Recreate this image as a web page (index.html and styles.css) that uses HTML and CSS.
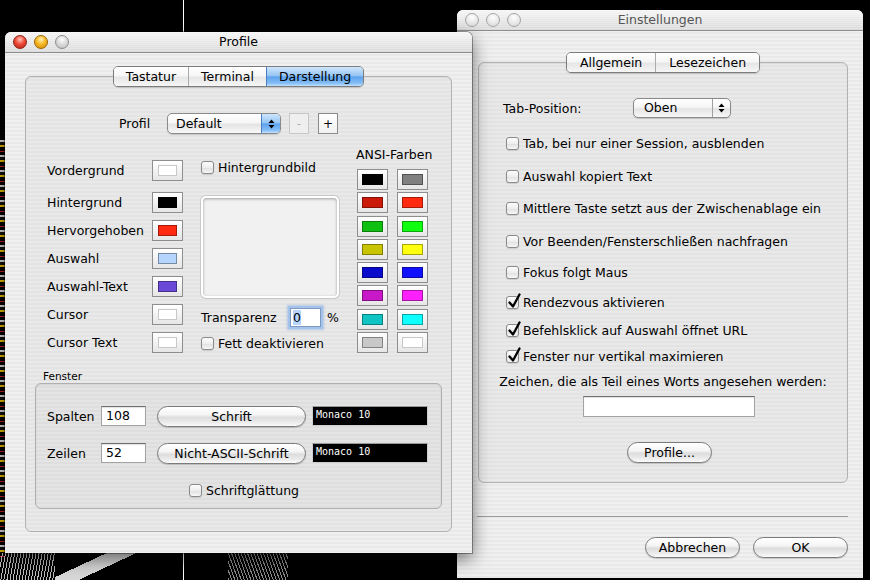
FILE: index.html
```html
<!DOCTYPE html>
<html lang="de">
<head>
<meta charset="utf-8">
<title>Profile – Einstellungen</title>
<link rel="stylesheet" href="styles.css">
</head>
<body>
<div class="desktop">

  <section class="window prefs inactive">
    <header class="titlebar">
      <div class="lights"><span class="light"></span><span class="light"></span><span class="light"></span></div>
      <h1 class="title">Einstellungen</h1>
      <div></div>
    </header>
    <div class="prefs-body">
      <div class="tabs">
        <span class="tab">Allgemein</span><span class="tab">Lesezeichen</span>
      </div>
      <div class="groupbox prefs-box">
        <div class="tabpos">
          <span class="tabpos-label">Tab-Position:</span>
          <div class="popup popup-oben">
            <span class="popup-text">Oben</span>
            <span class="popup-arrows"><svg width="7" height="12" viewBox="0 0 7 12"><path d="M3.5 1.5 L6.5 5 H0.5Z M3.5 10.5 L6.5 7 H0.5Z" fill="#000"/></svg></span>
          </div>
        </div>
        <ul class="checklist">
          <li class="check"><span class="cb"></span>Tab, bei nur einer Session, ausblenden</li>
          <li class="check"><span class="cb"></span>Auswahl kopiert Text</li>
          <li class="check"><span class="cb"></span>Mittlere Taste setzt aus der Zwischenablage ein</li>
          <li class="check"><span class="cb"></span>Vor Beenden/Fensterschließen nachfragen</li>
          <li class="check"><span class="cb"></span>Fokus folgt Maus</li>
          <li class="check"><span class="cb checked"><svg class="tick" viewBox="0 0 14 16"><path d="M2.5 9.5 L6 13.5 L12.5 1.5"/></svg></span>Rendezvous aktivieren</li>
          <li class="check"><span class="cb checked"><svg class="tick" viewBox="0 0 14 16"><path d="M2.5 9.5 L6 13.5 L12.5 1.5"/></svg></span>Befehlsklick auf Auswahl öffnet URL</li>
          <li class="check"><span class="cb checked"><svg class="tick" viewBox="0 0 14 16"><path d="M2.5 9.5 L6 13.5 L12.5 1.5"/></svg></span>Fenster nur vertikal maximieren</li>
        </ul>
        <p class="zeichen">Zeichen, die als Teil eines Worts angesehen werden:</p>
        <div class="textfield wordchars"></div>
        <button class="btn profile-btn">Profile...</button>
      </div>
      <hr class="sep">
      <div class="dialog-buttons">
        <button class="btn dlg-btn">Abbrechen</button>
        <button class="btn dlg-btn">OK</button>
      </div>
    </div>
  </section>

  <section class="window profile">
    <header class="titlebar">
      <div class="lights"><span class="light red"></span><span class="light yellow"></span><span class="light grey"></span></div>
      <h1 class="title">Profile</h1>
      <div></div>
    </header>
    <div class="profile-body">
      <div class="tabs">
        <span class="tab">Tastatur</span><span class="tab">Terminal</span><span class="tab selected">Darstellung</span>
      </div>
      <div class="groupbox profile-box">
        <div class="profil-row">
          <span class="profil-label">Profil</span>
          <div class="popup popup-default">
            <span class="popup-text">Default</span>
            <span class="popup-arrows blue"><svg width="7" height="12" viewBox="0 0 7 12"><path d="M3.5 1.5 L6.5 5 H0.5Z M3.5 10.5 L6.5 7 H0.5Z" fill="#000"/></svg></span>
          </div>
          <span class="sq-btn disabled">-</span>
          <span class="sq-btn">+</span>
        </div>

        <div class="main">
          <div class="colors">
            <span class="clabel">Vordergrund</span><span class="well"><span class="swatch c-white"></span></span>
            <span class="clabel">Hintergrund</span><span class="well"><span class="swatch c-black"></span></span>
            <span class="clabel">Hervorgehoben</span><span class="well"><span class="swatch c-red"></span></span>
            <span class="clabel">Auswahl</span><span class="well"><span class="swatch c-lightblue"></span></span>
            <span class="clabel">Auswahl-Text</span><span class="well"><span class="swatch c-purple"></span></span>
            <span class="clabel">Cursor</span><span class="well"><span class="swatch c-white"></span></span>
            <span class="clabel">Cursor Text</span><span class="well"><span class="swatch c-white"></span></span>
          </div>

          <div class="bgcol">
            <div class="check bgimg"><span class="cb"></span>Hintergrundbild</div>
            <div class="imagewell"></div>
            <div class="transp">
              <span class="transp-label">Transparenz</span>
              <span class="transp-input"><span class="sel">0</span></span>
              <span class="pct">%</span>
            </div>
            <div class="check fett"><span class="cb"></span>Fett deaktivieren</div>
          </div>

          <div class="ansi">
            <div class="ansi-title">ANSI-Farben</div>
            <div class="ansi-grid">
              <span class="well"><span class="swatch a-black"></span></span><span class="well"><span class="swatch a-grey"></span></span>
              <span class="well"><span class="swatch a-red"></span></span><span class="well"><span class="swatch a-red2"></span></span>
              <span class="well"><span class="swatch a-green"></span></span><span class="well"><span class="swatch a-green2"></span></span>
              <span class="well"><span class="swatch a-yellow"></span></span><span class="well"><span class="swatch a-yellow2"></span></span>
              <span class="well"><span class="swatch a-blue"></span></span><span class="well"><span class="swatch a-blue2"></span></span>
              <span class="well"><span class="swatch a-magenta"></span></span><span class="well"><span class="swatch a-magenta2"></span></span>
              <span class="well"><span class="swatch a-cyan"></span></span><span class="well"><span class="swatch a-cyan2"></span></span>
              <span class="well"><span class="swatch a-lgrey"></span></span><span class="well"><span class="swatch a-white"></span></span>
            </div>
          </div>
        </div>

        <div class="fenster-label">Fenster</div>
        <div class="fenster">
          <div class="frow">
            <span class="flabel">Spalten</span>
            <span class="textfield num">108</span>
            <button class="btn font-btn">Schrift</button>
            <span class="fontfield">Monaco 10</span>
          </div>
          <div class="frow second">
            <span class="flabel">Zeilen</span>
            <span class="textfield num">52</span>
            <button class="btn font-btn">Nicht-ASCII-Schrift</button>
            <span class="fontfield">Monaco 10</span>
          </div>
          <div class="check smooth"><span class="cb"></span>Schriftglättung</div>
        </div>
      </div>
    </div>
  </section>

</div>
</body>
</html>
```

FILE: styles.css
```css
* { box-sizing: border-box; }
html, body { margin: 0; padding: 0; }
body {
  width: 870px;
  height: 580px;
  overflow: hidden;
  font-family: "DejaVu Sans", "Liberation Sans", sans-serif;
  font-size: 12.5px;
  color: #000;
  background:
    linear-gradient(#fff, #fff) 183px 0 / 1px 580px no-repeat,
    repeating-linear-gradient(100deg, transparent 0 2px, rgba(255,255,255,.75) 2px 3px) 0 553px / 55px 27px no-repeat,
    linear-gradient(155deg, transparent 35%, #d8d8d8 35% 55%, transparent 55%) 55px 553px / 90px 27px no-repeat,
    repeating-linear-gradient(70deg, #8a8a8a 0 1px, transparent 1px 3px) 228px 553px / 60px 27px no-repeat,
    repeating-linear-gradient(#d5d5d5 0 2px, #111 2px 5px, #e0b800 5px 7px, #000 7px 11px, #c02020 11px 12px, #000 12px 15px) 0 140px / 5px 420px no-repeat,
    #000;
}
.desktop { position: relative; width: 870px; height: 580px; }

/* ---------- windows ---------- */
.window {
  position: absolute;
  display: flex;
  flex-direction: column;
  border-radius: 6px 6px 0 0;
  background: repeating-linear-gradient(#f0f0f0 0 2px, #e9e9e9 2px 4px);
  box-shadow: 0 0 0 1px rgba(0,0,0,.35), 0 6px 18px rgba(0,0,0,.55);
}
.profile { left: 5px; top: 32px; width: 467px; height: 521px; }
.prefs { left: 457px; top: 10px; width: 406px; height: 568px; }

.titlebar {
  flex: none;
  height: 21px;
  display: grid;
  grid-template-columns: 1fr auto 1fr;
  align-items: center;
  padding: 0 8px;
  border-radius: 6px 6px 0 0;
  background: repeating-linear-gradient(rgba(255,255,255,.25) 0 1px, transparent 1px 2px), linear-gradient(#f5f5f5, #dadada);
  border-bottom: 1px solid #8e8e8e;
}
.title { margin: 0; font-size: 12.5px; font-weight: normal; line-height: 20px; }
.inactive .title { color: #555; }

.lights { display: flex; gap: 7px; }
.light {
  width: 14px; height: 14px; border-radius: 50%;
  border: 1px solid #a6a6a6;
  background: radial-gradient(circle at 50% 30%, #ffffff 0, #ececec 45%, #d6d6d6 100%);
}
.light.red {
  border-color: #8a2015;
  background: radial-gradient(circle at 50% 30%, #ffc2b8 0, #ee4b3a 45%, #b5200f 100%);
}
.light.yellow {
  border-color: #9a6400;
  background: radial-gradient(circle at 50% 30%, #fff0b0 0, #f7b928 45%, #d18a00 100%);
}
.light.grey {
  border-color: #8c8c8c;
  background: radial-gradient(circle at 50% 30%, #ffffff 0, #dcdcdc 45%, #bcbcbc 100%);
}

/* ---------- common controls ---------- */
.tabs {
  align-self: center;
  position: relative;
  z-index: 1;
  display: flex;
  height: 21px;
  margin-bottom: -11px;
  border: 1px solid #7c7c7c;
  border-radius: 5px;
  overflow: hidden;
  box-shadow: 0 1px 1px rgba(0,0,0,.15);
}
.tab {
  padding: 0 12px;
  line-height: 19px;
  background: linear-gradient(#ffffff 0%, #f6f6f6 45%, #e6e6e6 55%, #f6f6f6 100%);
  border-left: 1px solid #ababab;
}
.tab:first-child { border-left: none; }
.tab.selected {
  background: linear-gradient(#cfe6fc 0%, #97c6f4 45%, #5ea3ee 52%, #84bdf6 85%, #c2e1fe 100%);
  border-left-color: #4a7fc4;
}

.groupbox {
  border: 1px solid #b2b2b2;
  border-radius: 6px;
  background: repeating-linear-gradient(#e9e9e9 0 2px, #e3e3e3 2px 4px);
  box-shadow: inset 0 1px 1px rgba(0,0,0,.06);
}

.btn {
  font: inherit;
  color: #000;
  height: 21px;
  padding: 0;
  border: 1px solid #7b7b7b;
  border-radius: 11px;
  background: linear-gradient(#ffffff 0%, #f5f5f5 40%, #dddddd 55%, #ebebeb 80%, #fbfbfb 100%);
  box-shadow: 0 1px 1px rgba(0,0,0,.18);
  line-height: 19px;
  text-align: center;
}

.check { display: flex; align-items: center; gap: 4px; height: 16px; white-space: nowrap; }
.cb {
  position: relative;
  flex: none;
  width: 13px; height: 13px;
  border: 1px solid #8a8a8a;
  border-radius: 3px;
  background: linear-gradient(#fdfdfd 0%, #eeeeee 50%, #e1e1e1 55%, #f7f7f7 100%);
  box-shadow: 0 1px 1px rgba(0,0,0,.12);
}
.tick {
  position: absolute;
  left: 0; top: -4px;
  width: 14px; height: 16px;
  fill: none;
  stroke: #000;
  stroke-width: 2.3;
  stroke-linecap: round;
  stroke-linejoin: round;
}

.textfield {
  display: block;
  background: #fff;
  border: 1px solid #a3a3a3;
  border-top-color: #6f6f6f;
  box-shadow: inset 0 1px 1px rgba(0,0,0,.12);
}

.popup {
  display: flex;
  height: 21px;
  border: 1px solid #8a8a8a;
  border-radius: 5px;
  overflow: hidden;
  background: linear-gradient(#ffffff 0%, #f6f6f6 45%, #e4e4e4 55%, #f8f8f8 100%);
  box-shadow: 0 1px 1px rgba(0,0,0,.15);
}
.popup-text { flex: 1; padding-left: 8px; line-height: 19px; }
.popup-arrows {
  flex: none;
  width: 19px;
  display: flex;
  align-items: center;
  justify-content: center;
  border-left: 1px solid #a0a0a0;
}
.popup-arrows.blue {
  border-left-color: #4a7fc4;
  background: linear-gradient(#cfe6fc 0%, #97c6f4 45%, #5ea3ee 52%, #84bdf6 85%, #c2e1fe 100%);
}

/* ---------- profile window ---------- */
.profile-body { flex: 1; display: flex; flex-direction: column; padding: 13px 20px 0; }
.profile-box { height: 456px; padding: 36px 9px 0; }

.profil-row { display: flex; align-items: center; height: 21px; margin-left: 84px; }
.profil-label { width: 48px; }
.popup-default { width: 114px; }
.sq-btn {
  width: 20px; height: 21px;
  margin-left: 8px;
  display: flex; align-items: center; justify-content: center;
  border: 1px solid #8a8a8a;
  background: linear-gradient(#ffffff, #f1f1f1);
  font-size: 12px;
}
.sq-btn.disabled { border-color: #c6c6c6; color: #b0b0b0; background: #efefef; }
.sq-btn + .sq-btn { margin-left: 9px; }

.main { display: flex; margin-top: 13px; }

.colors {
  display: grid;
  grid-template-columns: 105px 31px;
  grid-template-rows: 25px repeat(6, 21px);
  row-gap: 7px;
  align-items: start;
  margin-left: 12px;
  padding-top: 13px;
}
.clabel { line-height: 21px; white-space: nowrap; }
.well {
  display: block;
  width: 31px; height: 21px;
  padding: 4px 5px;
  border: 1px solid #8e8e8e;
  background: linear-gradient(#ffffff, #e6e6e6);
}
.swatch { display: block; width: 100%; height: 100%; border: 1px solid rgba(0,0,0,.35); }
.c-white { background: #fff; border-color: #c8c8c8; }
.c-black { background: #000; }
.c-red { background: #ff2a12; }
.c-lightblue { background: #b5d5ff; }
.c-purple { background: #6a4ad6; }

.bgcol { display: flex; flex-direction: column; width: 138px; margin-left: 18px; }
.bgimg { margin-top: 13px; height: 14px; }
.imagewell {
  margin-top: 22px;
  height: 102px;
  border-radius: 5px;
  border: 2px solid #fff;
  background: #f1f1f1;
  box-shadow: inset 0 1px 3px rgba(0,0,0,.35), 0 0 0 1px #c9c9c9;
}
.transp { display: flex; align-items: center; height: 19px; margin-top: 10px; }
.transp-label { width: 89px; white-space: nowrap; }
.transp-input {
  width: 31px; height: 19px;
  padding: 1px 2px;
  background: #fff;
  border: 1px solid #7f98c0;
  box-shadow: 0 0 0 2px #a3c3ec, 0 0 2px 3px rgba(120,160,220,.45);
  line-height: 15px;
}
.sel { background: #b5d5ff; }
.pct { margin-left: 6px; }
.fett { margin-top: 9px; height: 14px; }

.ansi { margin-left: 18px; }
.ansi-title { line-height: 15px; margin-left: -1px; white-space: nowrap; }
.ansi-grid {
  display: grid;
  grid-template-columns: 31px 31px;
  grid-auto-rows: 21px;
  column-gap: 9px;
  row-gap: 2.3px;
  margin-top: 7px;
}
.ansi-grid .well { padding: 4px 4px; }
.a-black { background: #000; }
.a-grey { background: #808080; }
.a-red { background: #cc1a0a; }
.a-red2 { background: #ff2a10; }
.a-green { background: #10c010; }
.a-green2 { background: #10ff10; }
.a-yellow { background: #c8c400; }
.a-yellow2 { background: #ffff10; }
.a-blue { background: #0a0acc; }
.a-blue2 { background: #1010ff; }
.a-magenta { background: #c818c8; }
.a-magenta2 { background: #ff20ff; }
.a-cyan { background: #10c4c4; }
.a-cyan2 { background: #10ffff; }
.a-lgrey { background: #c8c8c8; }
.a-white { background: #fff; border-color: #c8c8c8; }

.fenster-label { margin: 17px 0 0 8px; font-size: 10.5px; line-height: 13px; }
.fenster {
  height: 126px;
  border: 1px solid #afafaf;
  border-radius: 6px;
  background: repeating-linear-gradient(#e4e4e4 0 2px, #dedede 2px 4px);
  box-shadow: inset 0 1px 2px rgba(0,0,0,.08);
  padding: 21px 0 0 11px;
  display: flex;
  flex-direction: column;
}
.frow { display: flex; align-items: center; height: 22px; }
.frow.second { margin-top: 15px; }
.flabel { width: 54px; }
.textfield.num { width: 45px; height: 20px; padding-left: 4px; line-height: 18px; }
.font-btn { width: 149px; margin-left: 11px; }
.fontfield {
  width: 116px; height: 20px;
  margin-left: 6px;
  background: #000;
  color: #fff;
  font-family: "DejaVu Sans Mono", "Liberation Mono", monospace;
  font-size: 10px;
  line-height: 14px;
  padding: 1px 3px;
  border: 1px solid #d0d0d0;
  border-top-color: #9a9a9a;
}
.smooth { align-self: center; margin-top: 19px; height: 14px; }

/* ---------- prefs window ---------- */
.prefs-body { flex: 1; display: flex; flex-direction: column; padding: 21px 15px 0 21px; }
.prefs-body .tab { padding: 0 13px; }
.prefs-box {
  height: 421px;
  padding-top: 35px;
  display: flex;
  flex-direction: column;
}
.tabpos { display: flex; align-items: center; margin-left: 24px; height: 20px; }
.tabpos-label { width: 130px; }
.popup-oben { width: 98px; height: 20px; }
.popup-oben .popup-text { padding-left: 10px; line-height: 18px; }
.popup-oben .popup-arrows { width: 18px; }

.checklist { list-style: none; margin: 0 0 0 27px; padding: 0; }
.checklist li:nth-child(1) { margin-top: 17px; }
.checklist li:nth-child(2) { margin-top: 17px; }
.checklist li:nth-child(3) { margin-top: 16px; }
.checklist li:nth-child(4) { margin-top: 17px; }
.checklist li:nth-child(5) { margin-top: 15px; }
.checklist li:nth-child(6) { margin-top: 14px; }
.checklist li:nth-child(7) { margin-top: 12px; }
.checklist li:nth-child(8) { margin-top: 10px; }

.zeichen { margin: 10px 0 0; line-height: 16px; text-align: center; }
.wordchars { align-self: center; width: 172px; height: 21px; margin: 6px 0 0 12px; }
.profile-btn { align-self: center; width: 85px; margin: 25px 0 0 13px; }

.sep { margin: 33px 0 0 -1px; border: 0; height: 1px; background: #9c9c9c; }
.dialog-buttons { display: flex; justify-content: flex-end; gap: 13px; margin-top: 20px; }
.dlg-btn { width: 95px; }
```
